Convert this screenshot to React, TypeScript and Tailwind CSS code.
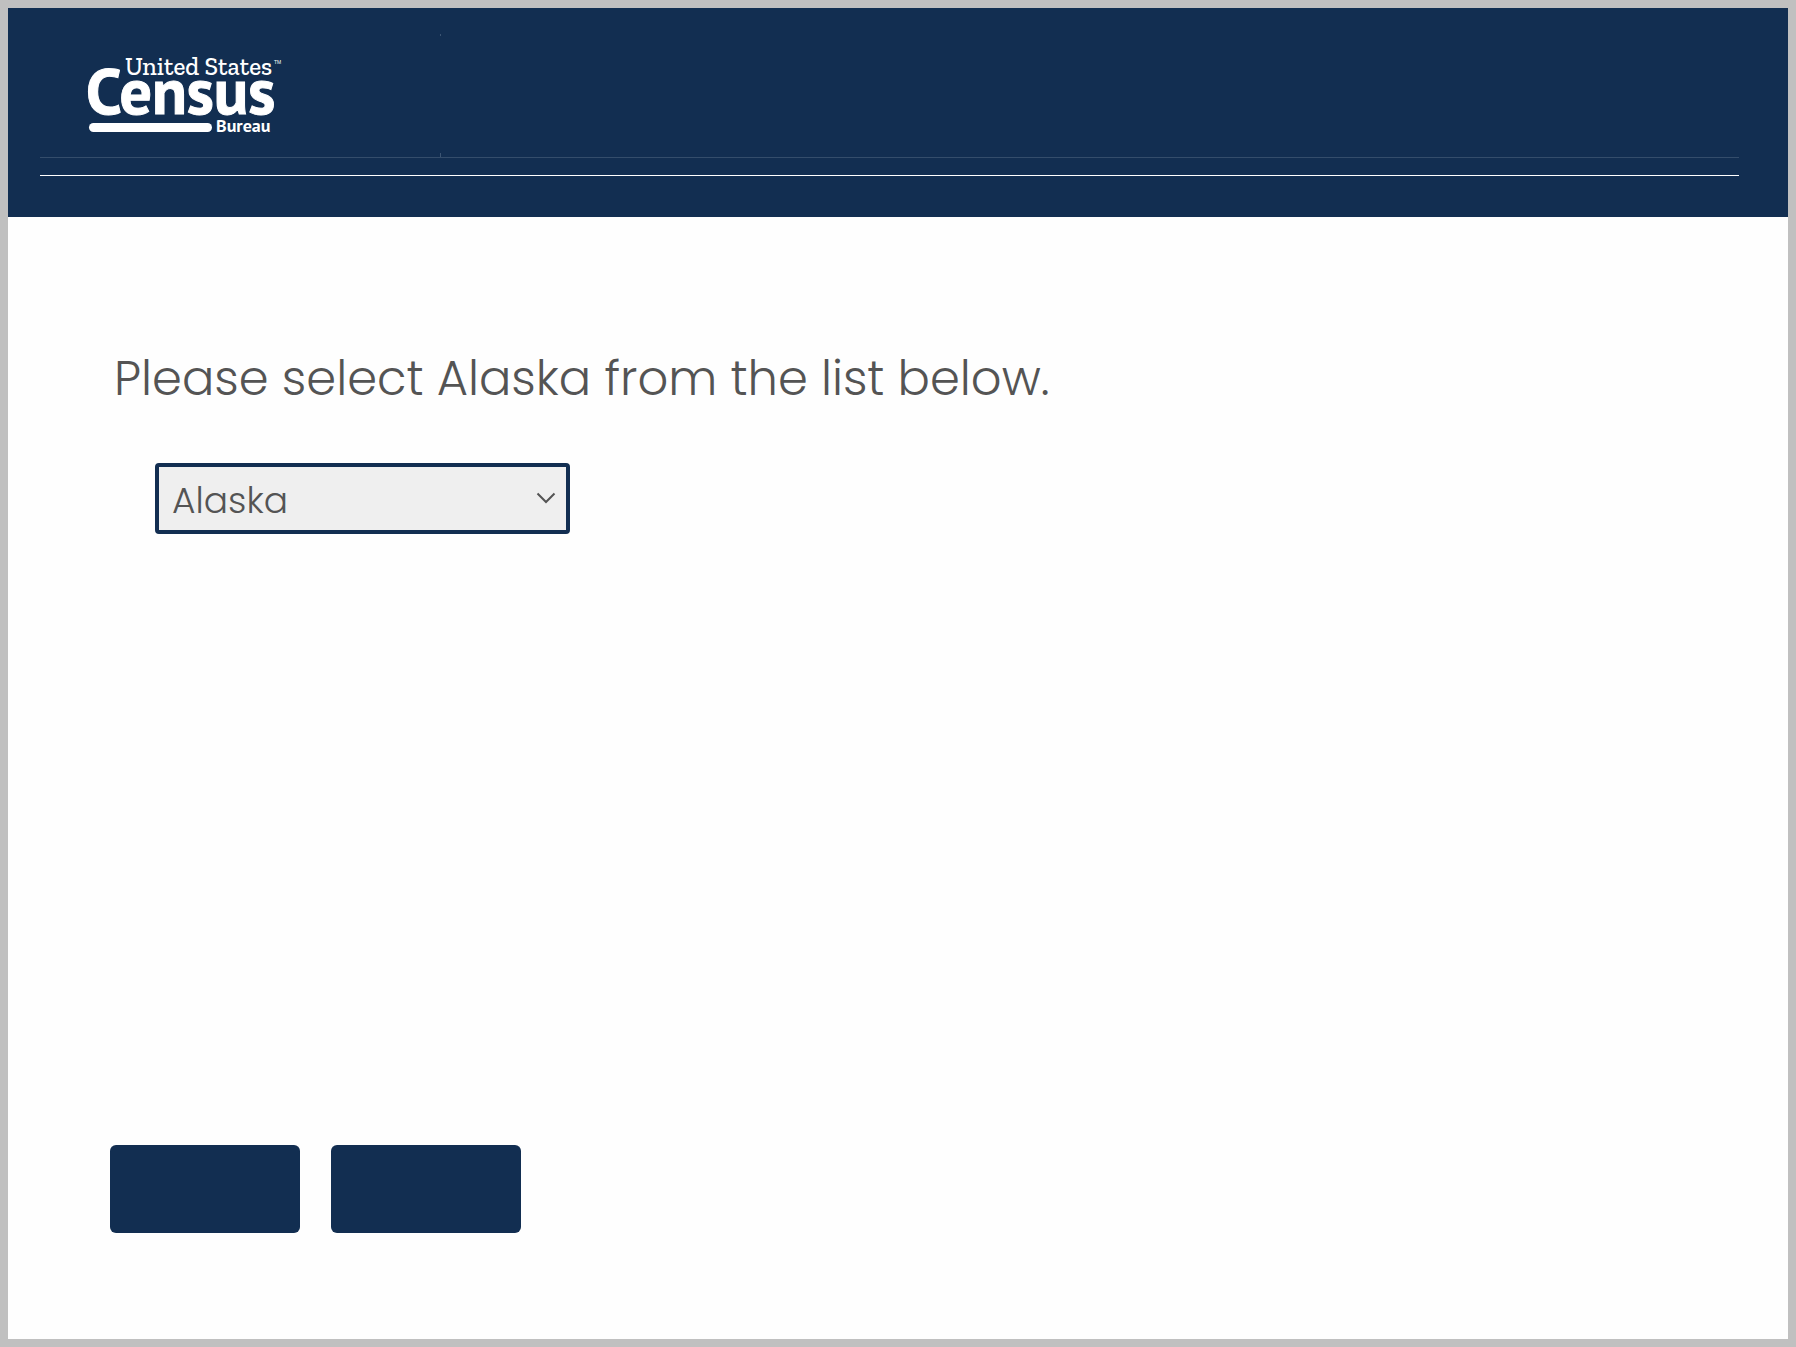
import { useState } from 'react';

const states = ['Alabama', 'Alaska', 'Arizona', 'Arkansas', 'California', 'Colorado'];

function CensusLogo() {
  return (
    <svg viewBox="0 0 200 84" className="h-[84px] w-[200px] overflow-visible fill-white" role="img" aria-label="United States Census Bureau">
      <text x="37" y="19" fontSize="25" className="font-['Zilla_Slab','Liberation_Serif',serif] font-medium">United States</text>
      <text x="186" y="8" fontSize="5" className="font-['Liberation_Sans',sans-serif]">TM</text>
      <text x="-2" y="58" fontSize="64" className="stroke-white stroke-1 font-['PT_Sans','Roboto',sans-serif] font-bold">Census</text>
      <rect x="1" y="67" width="123" height="9" rx="4.5" />
      <text x="128" y="76" fontSize="18" className="font-['PT_Sans','Roboto',sans-serif] font-bold">Bureau</text>
    </svg>
  );
}

export default function App() {
  const [selected, setSelected] = useState('Alaska');

  return (
    <div className="flex min-h-screen flex-col border-8 border-[#c0c0c0] bg-[#fefefe] font-['Poppins','Inter',sans-serif] font-light text-[#545454]">
      <header className="bg-[#122e51] pb-[41px] pl-8 pr-[49px]">
        <div className="flex h-[150px] border-b border-[#344d6b]">
          <div className="w-[400px] pl-12 pt-12">
            <CensusLogo />
          </div>
          <div className="flex flex-col justify-between pt-[26px]">
            <span className="h-[2px] w-px bg-[#3c5573]" />
            <span className="h-1 w-px bg-[#3c5573]" />
          </div>
        </div>
        <div className="mt-[17px] h-px bg-white" />
      </header>

      <main className="flex flex-1 flex-col px-[102px] pb-[106px] pt-[126px]">
        <label htmlFor="state" className="pl-1 text-[48px] leading-[72px]">
          Please select Alaska from the list below.
        </label>

        <div className="relative ml-[45px] mt-12 w-[415px] max-w-full">
          <select
            id="state"
            value={selected}
            onChange={(e) => setSelected(e.target.value)}
            className="h-[71px] w-full appearance-none rounded border-4 border-[#122e51] bg-[#efefef] px-[13px] pt-1 text-[36px] font-light outline-none"
          >
            {states.map((state) => (
              <option key={state} value={state}>
                {state}
              </option>
            ))}
          </select>
          <svg viewBox="0 0 20 12" className="pointer-events-none absolute right-[14px] top-[29px] h-3 w-5 fill-none stroke-[#545454] stroke-2">
            <path d="M1.5 1.5 10 10l8.500-8.500" />
          </svg>
        </div>

        <div className="mt-auto flex gap-[31px]">
          <button type="button" aria-label="Previous" className="h-[88px] w-[190px] rounded-md bg-[#122e51]" />
          <button type="button" aria-label="Next" className="h-[88px] w-[190px] rounded-md bg-[#122e51]" />
        </div>
      </main>
    </div>
  );
}
